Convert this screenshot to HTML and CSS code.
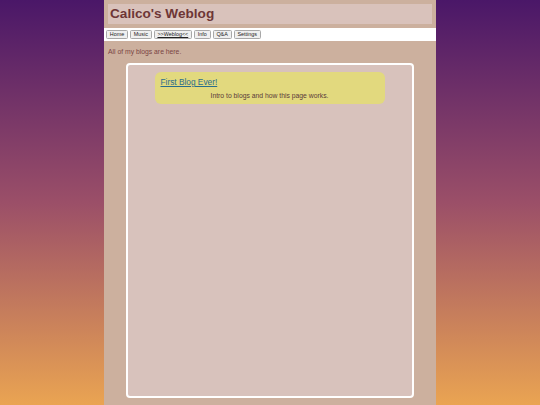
FILE: index.html
```html
<!DOCTYPE html>
<html lang="en">
<head>
<meta charset="utf-8">
<title>Calico's Weblog</title>
<link rel="stylesheet" href="styles.css">
</head>
<body>
<div class="page">
  <header class="header">
    <h1 class="title">Calico's Weblog</h1>
  </header>
  <nav class="nav">
    <button class="btn">Home</button>
    <button class="btn">Music</button>
    <button class="btn btn-current">&gt;&gt;Weblog&lt;&lt;</button>
    <button class="btn">Info</button>
    <button class="btn">Q&amp;A</button>
    <button class="btn">Settings</button>
  </nav>
  <p class="intro">All of my blogs are here.</p>
  <div class="blogbox">
    <div class="card">
      <a class="card-link" href="#">First Blog Ever!</a>
      <p class="card-desc">Intro to blogs and how this page works.</p>
    </div>
  </div>
</div>
</body>
</html>
```
FILE: styles.css
```css
html, body {
  margin: 0;
  padding: 0;
  height: 100%;
}
body {
  background: linear-gradient(to bottom, #4a1768 0%, #9b4f68 50%, #eaa452 100%);
  font-family: "Liberation Sans", Arial, sans-serif;
}
.page {
  width: 332px;
  margin: 0 auto;
  min-height: 100%;
  background: #ccb09e;
  box-sizing: border-box;
  padding-bottom: 7px;
}
.header {
  padding: 4px;
}
.title {
  margin: 0;
  height: 20px;
  line-height: 20px;
  background: #d9c2bb;
  padding-left: 2px;
  font-size: 13.6px;
  font-weight: bold;
  color: #6e3636;
}
.nav {
  background: #ffffff;
  height: 13px;
  display: flex;
  align-items: center;
  gap: 2px;
  padding-left: 2px;
}
.btn {
  font-family: "Liberation Sans", Arial, sans-serif;
  font-size: 5.4px;
  line-height: 7px;
  height: 9px;
  padding: 0 2.8px;
  margin: 0;
  border: 1px solid #a8a8a8;
  border-radius: 1.5px;
  background: #efefef;
  color: #222;
}
.btn-current {
  text-decoration: underline;
}
.intro {
  margin: 7px 0 0 4px;
  font-size: 6.8px;
  line-height: 8px;
  color: #7a4444;
}
.blogbox {
  margin: 7px 22px 0 22px;
  height: 335px;
  box-sizing: border-box;
  border: 2.5px solid #ffffff;
  border-radius: 4px;
  background: #d8c2bc;
  padding: 7px 26px 0 26.5px;
}
.card {
  width: 230px;
  height: 31.5px;
  box-sizing: border-box;
  background: #e2d97e;
  border-radius: 6px;
  padding: 5px 6px 0 6px;
}
.card-link {
  display: block;
  font-size: 8.3px;
  line-height: 10px;
  color: #2b6d8c;
  text-decoration: underline;
}
.card-desc {
  margin: 5px 0 0 0;
  text-align: center;
  font-size: 6.8px;
  line-height: 8px;
  color: #5a3a3a;
}
```
